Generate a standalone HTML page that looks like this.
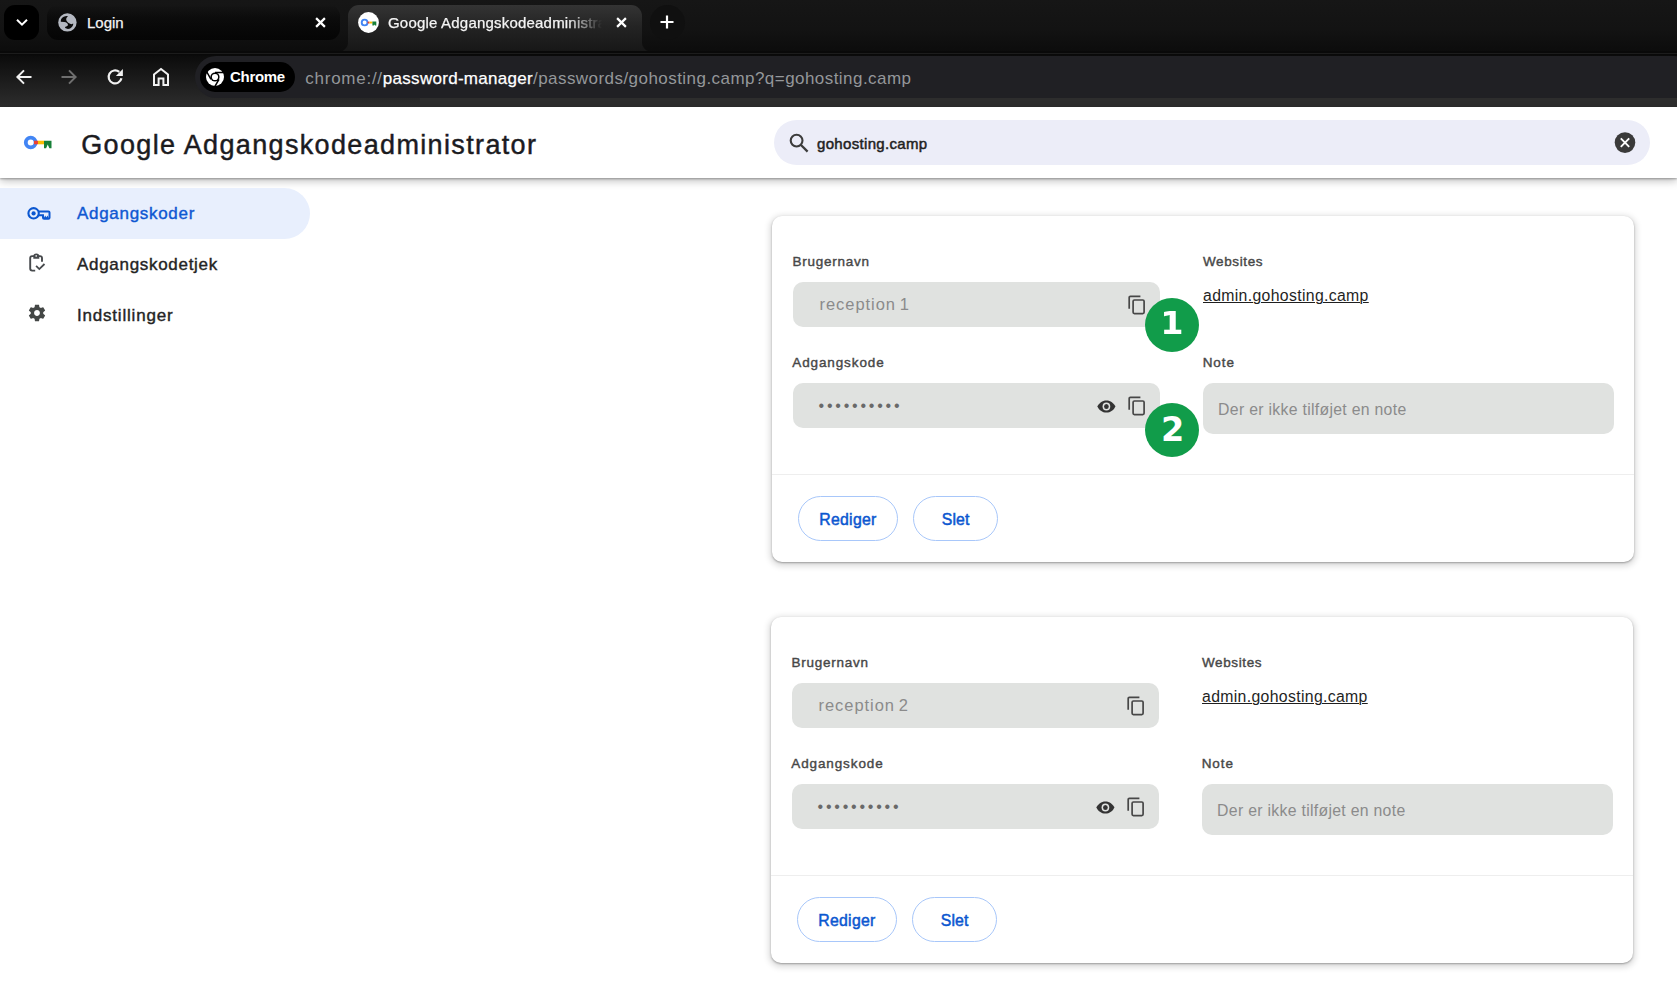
<!DOCTYPE html>
<html lang="da">
<head>
<meta charset="utf-8">
<title>Google Adgangskodeadministrator</title>
<style>
*{box-sizing:border-box;margin:0;padding:0}
html,body{width:1677px;height:987px;overflow:hidden;background:#fff}
body{position:relative;font-family:"Liberation Sans",sans-serif;color:#1f1f1f}
.abs{position:absolute}
.t{position:absolute;white-space:pre;line-height:1}
/* ---------- browser chrome ---------- */
#tabstrip{left:0;top:0;width:1677px;height:52px;background:linear-gradient(180deg,#161616 0,#131313 55%,#0c0c0c 100%)}
#toolbar{left:0;top:52px;width:1677px;height:55px;background:linear-gradient(180deg,#050505 0,#0c0c0c 8%,#2d2d2d 100%)}
#tsline{left:0;top:53px;width:1677px;height:1px;background:#1c1c1c}
#omni{left:194.5px;top:55.8px;width:1500px;height:42.4px;border-radius:21px;background:#202024}
#omnibelow{left:420px;top:98px;width:1257px;height:9px;background:#2d2d2d}
#chip{left:200px;top:62px;width:95px;height:29.6px;border-radius:15px;background:#000}
#tabsearch{left:4px;top:5px;width:35px;height:35px;border-radius:11px;background:#000}
#tab1{left:47px;top:5px;width:293px;height:35px;border-radius:11px;background:linear-gradient(180deg,rgba(5,5,5,0) 0,rgba(5,5,5,.55) 35%,#050505 100%)}
#tab2{left:348px;top:5px;width:294px;height:47px;border-radius:11px 11px 0 0;background:linear-gradient(180deg,#343434 0,#242424 45%,#171717 100%)}
#newtab{left:650px;top:5px;width:35px;height:35px;border-radius:50%;background:#101010}
/* ---------- page ---------- */
#header{left:0;top:107px;width:1677px;height:71px;background:#fff;box-shadow:0 1px 2px rgba(0,0,0,.3),0 3px 8px rgba(0,0,0,.25)}
#search{left:774px;top:120px;width:876px;height:45px;border-radius:23px;background:#ecedf8}
#navsel{left:0;top:188px;width:310px;height:51px;border-radius:0 26px 26px 0;background:#e8effd}
.card{position:absolute;width:862px;height:345.5px;border-radius:10px;background:#fff;box-shadow:0 1px 2px 0 rgba(0,0,0,.3),0 2px 6px 2px rgba(0,0,0,.15)}
.field{position:absolute;background:#e0e2e0;border-radius:10px}
.lbl{font-size:13.5px;color:#444746;font-weight:700}
.btn{position:absolute;height:45.7px;border-radius:23px;border:1.25px solid #a8c7fa;background:#fff}
.sep{position:absolute;left:0;width:862px;height:1px;background:#eeeeee}
.badge{position:absolute;width:54px;height:54px;border-radius:50%;background:#119c4a}
.badge span{position:absolute;left:0;width:54px;text-align:center;font:700 32.5px/1 "DejaVu Sans",sans-serif;color:#fff}
</style>
</head>
<body>
<!-- browser chrome -->
<div id="tabstrip" class="abs"></div>
<div id="toolbar" class="abs"></div>
<div id="tsline" class="abs"></div>
<div id="omnibelow" class="abs"></div>
<div id="omni" class="abs"></div>
<div id="chip" class="abs"></div>
<div id="tabsearch" class="abs"></div>
<div id="tab1" class="abs"></div>
<div id="tab2" class="abs"></div>
<div id="newtab" class="abs"></div>
<div class="abs" style="left:338px;top:42px;width:10px;height:10px;background:radial-gradient(circle at 0 0,rgba(23,23,23,0) 9.5px,#181818 10.5px)"></div>
<div class="abs" style="left:642px;top:42px;width:10px;height:10px;background:radial-gradient(circle at 100% 0,rgba(23,23,23,0) 9.5px,#181818 10.5px)"></div>
<div class="abs" style="left:0;top:51px;width:1677px;height:2px;background:#090909"></div>


<!-- tab strip contents -->
<svg class="abs" style="left:14px;top:15px" width="16" height="16" viewBox="0 0 16 16"><path d="M3 4.8 L8 9.6 L13 4.8" fill="none" stroke="#fff" stroke-width="2"/></svg>
<svg class="abs" style="left:57.6px;top:12.6px" width="19" height="19" viewBox="0 0 19 19"><circle cx="9.4" cy="9.4" r="9.2" fill="#b4b8c1"/><path d="M9.9 3.2 C9 4.2 8 5.4 8.2 6.6 C8.3 7.4 8.5 7.9 8.9 8.3 C9.4 9 9.9 9.7 10.6 10.1 C11.6 10.7 12.6 11.2 13.5 11.2 L15.2 10.6 C15.4 12 14.6 14 12.1 15.5 C10.4 16.2 8.6 16 7.1 15.1 C7 14.6 7.1 14.1 7.4 13.7 C8.2 13.2 9.6 13.1 9.9 12.2 C10.1 11.4 9.6 10.6 8.9 10.1 C8.2 9.5 7.3 9.1 6.4 9 L2.8 8.8 C2.7 7.8 2.8 6.8 3.2 5.9 C3.8 4.9 4.6 4.2 5.7 3.7 C7 3.2 8.6 3 9.9 3.2 Z" fill="#0b0b0b"/></svg>
<div class="t" style="left:87px;top:15px;font-size:15px;color:#f4f4f4;-webkit-text-stroke:.25px #f4f4f4">Login</div>
<svg class="abs" style="left:314px;top:16px" width="13" height="13" viewBox="0 0 13 13"><path d="M2.1 2.1 L10.9 10.9 M10.9 2.1 L2.1 10.9" stroke="#fff" stroke-width="2.2" fill="none"/></svg>
<!-- active tab favicon -->
<svg class="abs" style="left:358px;top:12px" width="21" height="21" viewBox="0 0 21 21"><circle cx="10.5" cy="10.5" r="10.4" fill="#fff"/><circle cx="6.6" cy="10.5" r="2.9" fill="none" stroke="#4285f4" stroke-width="1.9"/><rect x="9.6" y="9.6" width="1.8" height="1.9" fill="#ea4335"/><rect x="11.4" y="9.6" width="3" height="1.9" fill="#fbbc04"/><path d="M14.4 9.6 H18.3 V13.6 H17 L16.35 12.6 L15.7 13.6 H14.4 Z" fill="#188038"/></svg>
<div class="abs" style="left:388px;top:10px;width:214px;height:26px;overflow:hidden;-webkit-mask-image:linear-gradient(90deg,#000 0,#000 84%,transparent 100%);mask-image:linear-gradient(90deg,#000 0,#000 84%,transparent 100%)"><div class="t" style="left:0;top:5px;font-size:15px;color:#f4f4f4;letter-spacing:.2px;-webkit-text-stroke:.25px #f4f4f4">Google Adgangskodeadministrator</div></div>
<svg class="abs" style="left:615px;top:16px" width="13" height="13" viewBox="0 0 13 13"><path d="M2.1 2.1 L10.9 10.9 M10.9 2.1 L2.1 10.9" stroke="#fff" stroke-width="2.2" fill="none"/></svg>
<svg class="abs" style="left:659px;top:14px" width="16" height="16" viewBox="0 0 16 16"><path d="M8 1.5 V14.5 M1.5 8 H14.5" stroke="#fff" stroke-width="2.2" fill="none"/></svg>
<!-- toolbar icons -->
<svg class="abs" style="left:15px;top:68px" width="18" height="18" viewBox="0 0 18 18"><path d="M16.5 9 H3 M9 2.4 L2.4 9 L9 15.6" fill="none" stroke="#f1f1f1" stroke-width="2"/></svg>
<svg class="abs" style="left:60px;top:68px" width="18" height="18" viewBox="0 0 18 18"><path d="M1.5 9 H15 M9 2.4 L15.6 9 L9 15.6" fill="none" stroke="#6f6f6f" stroke-width="2"/></svg>
<svg class="abs" style="left:105px;top:67px" width="20" height="20" viewBox="0 0 20 20"><path d="M16.46 11.25 A6.5 6.5 0 1 1 14.28 4.92" fill="none" stroke="#f1f1f1" stroke-width="2.2"/><path d="M17.9 1.9 V8.9 H10.9 Z" fill="#f1f1f1"/></svg>
<svg class="abs" style="left:151px;top:66px" width="20" height="21" viewBox="0 0 20 21"><path d="M3 19 V8.4 L10 3 L17 8.4 V19 H12.4 V12.4 H7.6 V19 Z" fill="none" stroke="#f1f1f1" stroke-width="2" stroke-linejoin="miter"/></svg>
<!-- chrome chip -->
<svg class="abs" style="left:205px;top:67px" width="20" height="20" viewBox="0 0 20 20"><circle cx="10" cy="10" r="9" fill="#fff"/><circle cx="10" cy="10" r="4.6" fill="#000"/><circle cx="10" cy="10" r="3.1" fill="#fff"/><path d="M10 5.4 H18.2 M6 12.3 L1.9 5.2 M14 12.3 L9.9 19.4" stroke="#000" stroke-width="1.5" fill="none" transform="rotate(0 10 10)"/></svg>
<div class="t" style="left:230px;top:69px;font-size:15px;font-weight:700;color:#fff;letter-spacing:-.3px">Chrome</div>
<div class="t" style="left:305.3px;top:69.5px;font-size:17px;color:#94979a;letter-spacing:.45px"><span style="letter-spacing:.74px">chrome://</span><span style="color:#fff;letter-spacing:.29px;-webkit-text-stroke:.25px #fff">password-manager</span>/passwords/gohosting.camp?q=gohosting.camp</div>

<!-- page -->
<div id="header" class="abs"></div>
<div id="search" class="abs"></div>
<div id="navsel" class="abs"></div>


<!-- header contents -->
<svg class="abs" style="left:23px;top:134px" width="30" height="17" viewBox="0 0 30 17"><circle cx="7.7" cy="8.5" r="4.9" fill="none" stroke="#4285f4" stroke-width="3.8"/><rect x="11" y="6.7" width="4" height="3.6" fill="#ea4335"/><rect x="15" y="6.7" width="6" height="3.6" fill="#fbbc04"/><path d="M21 6.7 H28.5 V14.3 H26.4 L24.75 10.6 L23.1 14.3 H21 Z" fill="#188038"/></svg>
<div class="t" style="left:81.2px;top:131.9px;font-size:27px;color:#1b1b1f;letter-spacing:1.35px;-webkit-text-stroke:.45px #1b1b1f">Google Adgangskodeadministrator</div>
<svg class="abs" style="left:788px;top:132px" width="22" height="22" viewBox="0 0 22 22"><circle cx="8.6" cy="8.6" r="5.9" fill="none" stroke="#3c3c3c" stroke-width="2.1"/><path d="M13 13 L19.6 19.6" stroke="#3c3c3c" stroke-width="2.3" fill="none"/></svg>
<div class="t" style="left:817px;top:136px;font-size:15px;color:#1f1f1f;letter-spacing:.33px;-webkit-text-stroke:.5px #1f1f1f">gohosting.camp</div>
<svg class="abs" style="left:1613px;top:131px" width="23" height="23" viewBox="0 0 23 23"><circle cx="12" cy="11.6" r="10.3" fill="#3a3a3a"/><path d="M7.8 7.4 L16.2 15.8 M16.2 7.4 L7.8 15.8" stroke="#fff" stroke-width="1.9" fill="none"/></svg>
<!-- sidebar -->
<svg class="abs" style="left:27px;top:206px" width="25" height="15" viewBox="0 0 25 15"><circle cx="6.6" cy="7.3" r="5.2" fill="none" stroke="#0b57d0" stroke-width="2.1"/><circle cx="6.6" cy="7.4" r="2.1" fill="#0b57d0"/><path d="M11.3 5.4 H21.4 Q22.5 5.4 22.5 6.5 V11.7 Q22.5 12.8 21.4 12.8 H17.1 Q16 12.8 16 11.7 V9.3 H11.3" fill="none" stroke="#0b57d0" stroke-width="2"/><path d="M16.6 12.6 L18.2 9.6 L19.3 11.6 L20.4 9.6 L22 12.6 Z" fill="#0b57d0"/></svg>
<div class="t" style="left:77px;top:205.4px;font-size:17px;color:#0f58d2;letter-spacing:.7px;-webkit-text-stroke:.4px #0f58d2">Adgangskoder</div>
<svg class="abs" style="left:28px;top:252px" width="19" height="21" viewBox="0 0 19 21"><path d="M7.2 18.6 H4.2 Q2.2 18.6 2.2 16.6 V6.1 Q2.2 4.1 4.2 4.1 H12 Q14 4.1 14 6.1 V9.7" fill="none" stroke="#474a4d" stroke-width="1.9"/><path d="M5.3 6.8 V4 Q5.3 1.5 8.3 1.5 Q11.3 1.5 11.3 4 V6.8 Z" fill="#474a4d"/><circle cx="8.2" cy="3.9" r=".85" fill="#e8e8e8"/><path d="M8.1 13.9 L11.3 17.1 L16.5 12" fill="none" stroke="#474a4d" stroke-width="1.8"/></svg>
<div class="t" style="left:77px;top:256.4px;font-size:17px;color:#242424;letter-spacing:.7px;-webkit-text-stroke:.4px #242424">Adgangskodetjek</div>
<svg class="abs" style="left:26.8px;top:302.7px" width="20" height="20" viewBox="0 0 24 24"><path fill="#444746" d="M19.43 12.98c.04-.32.07-.64.07-.98s-.03-.66-.07-.98l2.11-1.65c.19-.15.24-.42.12-.64l-2-3.46c-.12-.22-.39-.3-.61-.22l-2.49 1c-.52-.4-1.08-.73-1.69-.98l-.38-2.65C14.46 2.18 14.25 2 14 2h-4c-.25 0-.46.18-.49.42l-.38 2.65c-.61.25-1.17.59-1.69.98l-2.49-1c-.23-.09-.49 0-.61.22l-2 3.46c-.13.22-.07.49.12.64l2.11 1.65c-.04.32-.07.65-.07.98s.03.66.07.98l-2.11 1.65c-.19.15-.24.42-.12.64l2 3.46c.12.22.39.3.61.22l2.49-1c.52.4 1.08.73 1.69.98l.38 2.65c.03.24.24.42.49.42h4c.25 0 .46-.18.49-.42l.38-2.65c.61-.25 1.17-.59 1.69-.98l2.49 1c.23.09.49 0 .61-.22l2-3.46c.12-.22.07-.49-.12-.64l-2.11-1.65zM12 15.5c-1.93 0-3.500-1.570-3.500-3.500s1.570-3.500 3.500-3.500 3.500 1.570 3.500 3.500-1.570 3.500-3.500 3.500z"/></svg>
<div class="t" style="left:77px;top:307px;font-size:17px;color:#242424;letter-spacing:.8px;-webkit-text-stroke:.4px #242424">Indstillinger</div>
<!-- cards -->
<div class="card" style="left:772px;top:216px">
<div class="t" style="left:20.5px;top:38.7px;font-size:13.5px;color:#474747;-webkit-text-stroke:.4px #474747;letter-spacing:.74px">Brugernavn</div>
<div class="field" style="left:21px;top:66px;width:367px;height:45px"></div>
<div class="t" style="left:47.5px;top:79.6px;font-size:16.5px;color:#8b8b8b;letter-spacing:.95px;word-spacing:-1.6px">reception 1</div>
<svg class="abs" style="left:356px;top:78.7px" width="18" height="20" viewBox="0 0 18 20"><path d="M1.2 13.7 V2.5 Q1.2 1.3 2.4 1.3 H12.4" fill="none" stroke="#474747" stroke-width="1.7"/><rect x="5.1" y="5" width="11" height="13.6" rx="1.3" fill="none" stroke="#474747" stroke-width="1.7"/></svg>
<div class="t" style="left:431px;top:38.7px;font-size:13.5px;color:#474747;-webkit-text-stroke:.4px #474747;letter-spacing:.62px">Websites</div>
<div class="t" style="left:431px;top:72px;font-size:15.8px;color:#1f1f1f;text-decoration:underline;text-decoration-thickness:1.25px;text-underline-offset:1px;letter-spacing:.34px">admin.gohosting.camp</div>
<div class="t" style="left:20.3px;top:140.2px;font-size:13.5px;color:#474747;-webkit-text-stroke:.4px #474747;letter-spacing:.88px">Adgangskode</div>
<div class="field" style="left:21px;top:167px;width:367px;height:45px"></div>
<div class="t" style="left:46.5px;top:182px;font-size:16px;color:#696969;letter-spacing:2.78px">••••••••••</div>
<svg class="abs" style="left:325.4px;top:183.5px" width="18.8" height="13" viewBox="0 0 20 13" preserveAspectRatio="none"><path d="M10 0.4 C5.6 0.4 2 3 0.5 6.5 C2 10 5.6 12.6 10 12.6 C14.4 12.6 18 10 19.5 6.5 C18 3 14.4 0.4 10 0.4 Z" fill="#333"/><circle cx="10" cy="6.5" r="4.1" fill="#e0e2e0"/><circle cx="10" cy="6.5" r="2.5" fill="#333"/></svg>
<svg class="abs" style="left:356px;top:179.7px" width="18" height="20" viewBox="0 0 18 20"><path d="M1.2 13.7 V2.5 Q1.2 1.3 2.4 1.3 H12.4" fill="none" stroke="#474747" stroke-width="1.7"/><rect x="5.1" y="5" width="11" height="13.6" rx="1.3" fill="none" stroke="#474747" stroke-width="1.7"/></svg>
<div class="t" style="left:430.7px;top:140.2px;font-size:13.5px;color:#474747;-webkit-text-stroke:.4px #474747;letter-spacing:.93px">Note</div>
<div class="field" style="left:431px;top:167px;width:411px;height:50.5px"></div>
<div class="t" style="left:446.1px;top:186px;font-size:15.8px;color:#8b8b8b;letter-spacing:.3px">Der er ikke tilføjet en note</div>
<div class="sep" style="top:258px"></div>
<div class="btn" style="left:25.6px;top:279.5px;width:100.4px"></div><div class="t" style="left:47.3px;top:296.2px;font-size:15.8px;color:#0b57d0;-webkit-text-stroke:.5px #0b57d0;letter-spacing:.28px">Rediger</div>
<div class="btn" style="left:140.8px;top:279.5px;width:85.4px"></div><div class="t" style="left:169.7px;top:296.2px;font-size:15.8px;color:#0b57d0;-webkit-text-stroke:.5px #0b57d0;letter-spacing:.17px">Slet</div>
<div class="badge" style="left:373px;top:82px"><span style="top:9.4px;left:-.4px;transform:scaleX(1.03)">1</span></div>
<div class="badge" style="left:373px;top:187px"><span style="top:9.6px;left:.6px;font-size:33.5px">2</span></div>
</div>
<div class="card" style="left:771px;top:617px">
<div class="t" style="left:20.5px;top:38.7px;font-size:13.5px;color:#474747;-webkit-text-stroke:.4px #474747;letter-spacing:.74px">Brugernavn</div>
<div class="field" style="left:21px;top:66px;width:367px;height:45px"></div>
<div class="t" style="left:47.5px;top:79.6px;font-size:16.5px;color:#8b8b8b;letter-spacing:.95px;word-spacing:-1.6px">reception 2</div>
<svg class="abs" style="left:356px;top:78.7px" width="18" height="20" viewBox="0 0 18 20"><path d="M1.2 13.7 V2.5 Q1.2 1.3 2.4 1.3 H12.4" fill="none" stroke="#474747" stroke-width="1.7"/><rect x="5.1" y="5" width="11" height="13.6" rx="1.3" fill="none" stroke="#474747" stroke-width="1.7"/></svg>
<div class="t" style="left:431px;top:38.7px;font-size:13.5px;color:#474747;-webkit-text-stroke:.4px #474747;letter-spacing:.62px">Websites</div>
<div class="t" style="left:431px;top:72px;font-size:15.8px;color:#1f1f1f;text-decoration:underline;text-decoration-thickness:1.25px;text-underline-offset:1px;letter-spacing:.34px">admin.gohosting.camp</div>
<div class="t" style="left:20.3px;top:140.2px;font-size:13.5px;color:#474747;-webkit-text-stroke:.4px #474747;letter-spacing:.88px">Adgangskode</div>
<div class="field" style="left:21px;top:167px;width:367px;height:45px"></div>
<div class="t" style="left:46.5px;top:182px;font-size:16px;color:#696969;letter-spacing:2.78px">••••••••••</div>
<svg class="abs" style="left:325.4px;top:183.5px" width="18.8" height="13" viewBox="0 0 20 13" preserveAspectRatio="none"><path d="M10 0.4 C5.6 0.4 2 3 0.5 6.5 C2 10 5.6 12.6 10 12.6 C14.4 12.6 18 10 19.5 6.5 C18 3 14.4 0.4 10 0.4 Z" fill="#333"/><circle cx="10" cy="6.5" r="4.1" fill="#e0e2e0"/><circle cx="10" cy="6.5" r="2.5" fill="#333"/></svg>
<svg class="abs" style="left:356px;top:179.7px" width="18" height="20" viewBox="0 0 18 20"><path d="M1.2 13.7 V2.5 Q1.2 1.3 2.4 1.3 H12.4" fill="none" stroke="#474747" stroke-width="1.7"/><rect x="5.1" y="5" width="11" height="13.6" rx="1.3" fill="none" stroke="#474747" stroke-width="1.7"/></svg>
<div class="t" style="left:430.7px;top:140.2px;font-size:13.5px;color:#474747;-webkit-text-stroke:.4px #474747;letter-spacing:.93px">Note</div>
<div class="field" style="left:431px;top:167px;width:411px;height:50.5px"></div>
<div class="t" style="left:446.1px;top:186px;font-size:15.8px;color:#8b8b8b;letter-spacing:.3px">Der er ikke tilføjet en note</div>
<div class="sep" style="top:258px"></div>
<div class="btn" style="left:25.6px;top:279.5px;width:100.4px"></div><div class="t" style="left:47.3px;top:296.2px;font-size:15.8px;color:#0b57d0;-webkit-text-stroke:.5px #0b57d0;letter-spacing:.28px">Rediger</div>
<div class="btn" style="left:140.8px;top:279.5px;width:85.4px"></div><div class="t" style="left:169.7px;top:296.2px;font-size:15.8px;color:#0b57d0;-webkit-text-stroke:.5px #0b57d0;letter-spacing:.17px">Slet</div>
</div>

</body>
</html>
